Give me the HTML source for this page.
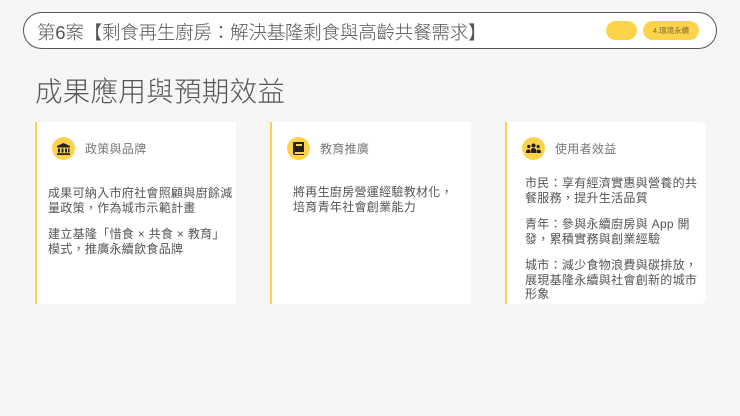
<!DOCTYPE html><html><head><meta charset="utf-8"><style>
*{margin:0;padding:0;box-sizing:border-box}
body{width:740px;height:416px;background:#f6f6f6;font-family:"Liberation Sans","Noto Sans CJK TC",sans-serif;position:relative;overflow:hidden;color:#555}
.hdr{position:absolute;left:23px;top:12px;width:694px;height:37px;border:1.5px solid #555;border-radius:19px;background:#fff}
.hdr .t{position:absolute;left:13px;top:6px;font-size:18.5px;color:#555;font-weight:300;letter-spacing:-0.2px}
.p1{position:absolute;left:582px;top:8px;width:31px;height:19px;border-radius:10px;background:#fdd34a}
.p2{position:absolute;left:619px;top:8px;width:56px;height:19px;border-radius:10px;background:#fdd34a;font-size:7.5px;color:#7a6a30;text-align:center;line-height:19px}
h1{position:absolute;left:35px;top:69px;font-size:27.5px;font-weight:300;color:#555;letter-spacing:0.3px}
.card{position:absolute;top:122px;width:201px;height:182px;background:#fff;border-left:2px solid #fcd34d}
.ic{position:absolute;left:15px;top:15px;width:23px;height:23px;border-radius:50%;background:#fdd34a;display:flex;align-items:center;justify-content:center}
.hd{position:absolute;left:48px;top:18px;font-size:12px;color:#777;letter-spacing:0.3px}
.bd{position:absolute;left:11px;font-size:12px;line-height:14.5px;color:#555;width:188px;letter-spacing:0.3px}
.bd p{margin-bottom:12px}
</style></head><body>
<div class="hdr"><div class="t">第6案【剩食再生廚房：解決基隆剩食與高齡共餐需求】</div><div class="p1"></div><div class="p2">4.環境永續</div></div>
<h1>成果應用與預期效益</h1>
<div class="card" style="left:35px"><div class="ic"><svg width="13" height="12" viewBox="0 0 13 12"><path d="M6.5 0L0 3v1.5h13V3z M1 5.5h2v4H1z M4.5 5.5h2v4h-2z M8 5.5h2v4H8z M11 5.5h1.5v4H11z M0 10.2h13V12H0z" fill="#222"/></svg></div><div class="hd">政策與品牌</div>
<div class="bd" style="top:64px;width:186px"><p>成果可納入市府社會照顧與廚餘減量政策，作為城市示範計畫</p><p>建立基隆「惜食 × 共食 × 教育」模式，推廣永續飲食品牌</p></div></div>
<div class="card" style="left:270px"><div class="ic"><svg width="11" height="13" viewBox="0 0 11 13"><path d="M1 0h10v10H2.5a1 1 0 0 0 0 2H11v1H2a2 2 0 0 1-2-2V1a1 1 0 0 1 1-1z M3 2v2h6V2z" fill="#222"/></svg></div><div class="hd">教育推廣</div>
<div class="bd" style="top:63px;left:21px;width:168px"><p>將再生廚房營運經驗教材化，培育青年社會創業能力</p></div></div>
<div class="card" style="left:505px;border-radius:0 6px 6px 0"><div class="ic"><svg width="15" height="11" viewBox="0 0 15 11"><circle cx="7.5" cy="2.5" r="2" fill="#222"/><circle cx="2.8" cy="3.5" r="1.6" fill="#222"/><circle cx="12.2" cy="3.5" r="1.6" fill="#222"/><path d="M4.5 10V8a3 3 0 0 1 6 0v2z M0 10V8.5a2.5 2.5 0 0 1 4-1.5V10z M15 10V8.5a2.5 2.5 0 0 0-4-1.5V10z" fill="#222"/></svg></div><div class="hd">使用者效益</div>
<div class="bd" style="top:54px;left:18px;width:176px"><p>市民：享有經濟實惠與營養的共餐服務，提升生活品質</p><p>青年：參與永續廚房與 App 開發，累積實務與創業經驗</p><p>城市：減少食物浪費與碳排放，展現基隆永續與社會創新的城市形象</p></div></div>
</body></html>
